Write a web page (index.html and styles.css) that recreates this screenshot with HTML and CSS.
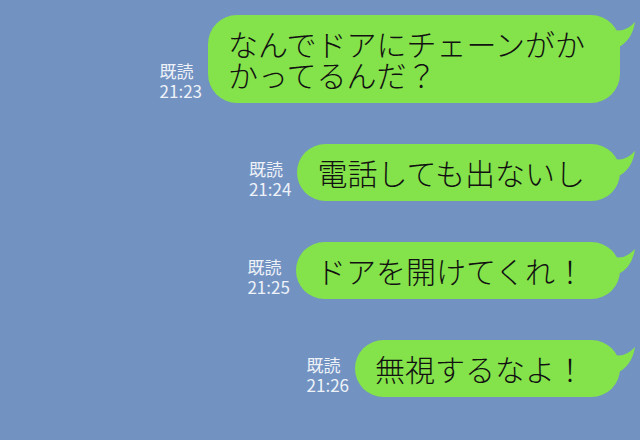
FILE: index.html
```html
<!DOCTYPE html>
<html lang="ja">
<head>
<meta charset="utf-8">
<link rel="stylesheet" href="styles.css">
</head>
<body>
<div class="chat">
  <div class="row">
    <div class="meta"><span>既読</span><span>21:23</span></div>
    <div class="bubble">なんでドアにチェーンがか<br>かってるんだ？
      <svg class="tail" viewBox="0 0 32 36" width="32" height="36"><path d="M4 12 Q18 21 31 7 Q28 26 13 33 L4 33 Z"/></svg>
    </div>
  </div>
  <div class="row">
    <div class="meta"><span>既読</span><span>21:24</span></div>
    <div class="bubble">電話しても出ないし
      <svg class="tail" viewBox="0 0 32 36" width="32" height="36"><path d="M4 12 Q18 21 31 7 Q28 26 13 33 L4 33 Z"/></svg>
    </div>
  </div>
  <div class="row">
    <div class="meta"><span>既読</span><span>21:25</span></div>
    <div class="bubble">ドアを開けてくれ！
      <svg class="tail" viewBox="0 0 32 36" width="32" height="36"><path d="M4 12 Q18 21 31 7 Q28 26 13 33 L4 33 Z"/></svg>
    </div>
  </div>
  <div class="row">
    <div class="meta"><span>既読</span><span>21:26</span></div>
    <div class="bubble">無視するなよ！
      <svg class="tail" viewBox="0 0 32 36" width="32" height="36"><path d="M4 12 Q18 21 31 7 Q28 26 13 33 L4 33 Z"/></svg>
    </div>
  </div>
</div>
</body>
</html>
```
FILE: styles.css
```css
html, body {
  margin: 0;
  padding: 0;
  background: #7292c2;
  width: 640px;
  height: 440px;
  overflow: hidden;
}
.chat {
  display: flex;
  flex-direction: column;
  gap: 41px;
  padding: 15px 20px 0 0;
  font-family: "Noto Sans CJK JP", "Noto Sans", sans-serif;
}
.row {
  display: flex;
  justify-content: flex-end;
  align-items: flex-end;
  gap: 6px;
}
.meta {
  display: flex;
  flex-direction: column;
  color: #eef2f8;
  font-size: 17px;
  line-height: 20px;
  padding-bottom: 2px;
}
.bubble {
  position: relative;
  background: #84e24a;
  color: #111;
  font-size: 30px;
  font-weight: 300;
  line-height: 31px;
  padding: 13px 35px 13px 20px;
  border-radius: 29px;
  white-space: nowrap;
}
.tail {
  position: absolute;
  top: 0;
  right: -16px;
  fill: #84e24a;
}
```
